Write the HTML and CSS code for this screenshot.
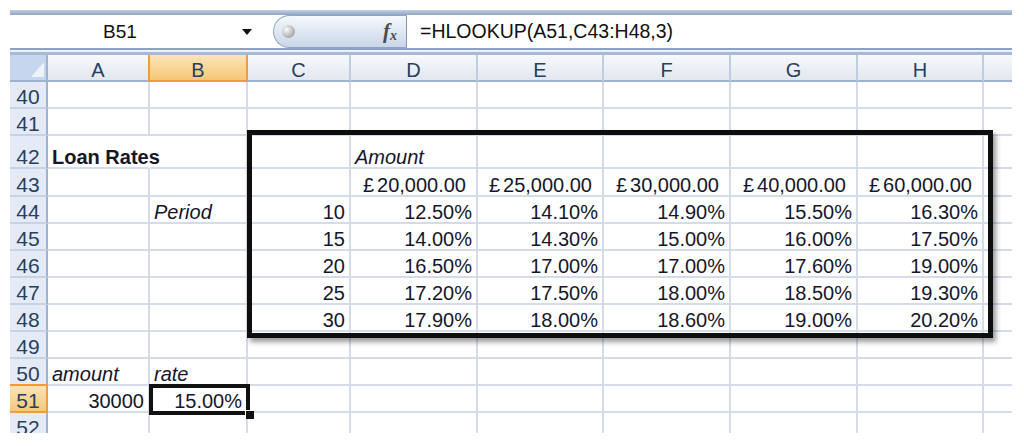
FILE: index.html
```html
<!DOCTYPE html>
<html lang="en">
<head>
    <meta charset="UTF-8">
    <title>Loan Rates - HLOOKUP</title>
    <link rel="stylesheet" href="styles.css">
</head>
<body>
<div class="app">
    <!-- formula bar -->
    <div class="band"></div>
    <div class="formula-bar">
        <div class="name-box"><span class="ref">B51</span><span class="arrow"></span></div>
        <div class="fx-btn"><span class="ball"></span><span class="fx"><i>f</i><sub>x</sub></span></div>
        <div class="formula">=HLOOKUP(A51,C43:H48,3)</div>
    </div>
    <div class="split"></div>

    <!-- worksheet -->
    <div class="sheet">
        <div class="row head">
            <div class="corner"><svg width="36" height="25" viewBox="0 0 36 25"><polygon points="34,7 34,22 21,22" fill="#eef3fa"/></svg></div>
            <div>A</div><div class="sel">B</div><div>C</div><div>D</div><div>E</div><div>F</div><div>G</div><div>H</div><div class="last"></div>
        </div>
        <div class="row"><div class="rh">40</div><div></div><div></div><div></div><div></div><div></div><div></div><div></div><div></div><div class="last"></div></div>
        <div class="row"><div class="rh">41</div><div></div><div></div><div></div><div></div><div></div><div></div><div></div><div></div><div class="last"></div></div>
        <div class="row h33"><div class="rh">42</div><div class="b spill">Loan Rates</div><div></div><div></div><div class="i">Amount</div><div></div><div></div><div></div><div></div><div class="last"></div></div>
        <div class="row h28"><div class="rh">43</div><div></div><div></div><div></div><div class="r cur"><span class="gbp">£</span>20,000.00</div><div class="r cur"><span class="gbp">£</span>25,000.00</div><div class="r cur"><span class="gbp">£</span>30,000.00</div><div class="r cur"><span class="gbp">£</span>40,000.00</div><div class="r cur"><span class="gbp">£</span>60,000.00</div><div class="last"></div></div>
        <div class="row"><div class="rh">44</div><div></div><div class="i">Period</div><div class="r">10</div><div class="r">12.50%</div><div class="r">14.10%</div><div class="r">14.90%</div><div class="r">15.50%</div><div class="r">16.30%</div><div class="last"></div></div>
        <div class="row"><div class="rh">45</div><div></div><div></div><div class="r">15</div><div class="r">14.00%</div><div class="r">14.30%</div><div class="r">15.00%</div><div class="r">16.00%</div><div class="r">17.50%</div><div class="last"></div></div>
        <div class="row"><div class="rh">46</div><div></div><div></div><div class="r">20</div><div class="r">16.50%</div><div class="r">17.00%</div><div class="r">17.00%</div><div class="r">17.60%</div><div class="r">19.00%</div><div class="last"></div></div>
        <div class="row"><div class="rh">47</div><div></div><div></div><div class="r">25</div><div class="r">17.20%</div><div class="r">17.50%</div><div class="r">18.00%</div><div class="r">18.50%</div><div class="r">19.30%</div><div class="last"></div></div>
        <div class="row"><div class="rh">48</div><div></div><div></div><div class="r">30</div><div class="r">17.90%</div><div class="r">18.00%</div><div class="r">18.60%</div><div class="r">19.00%</div><div class="r">20.20%</div><div class="last"></div></div>
        <div class="row"><div class="rh">49</div><div></div><div></div><div></div><div></div><div></div><div></div><div></div><div></div><div class="last"></div></div>
        <div class="row"><div class="rh">50</div><div class="i">amount</div><div class="i">rate</div><div></div><div></div><div></div><div></div><div></div><div></div><div class="last"></div></div>
        <div class="row"><div class="rh sel">51</div><div class="r">30000</div><div class="r">15.00%</div><div></div><div></div><div></div><div></div><div></div><div></div><div class="last"></div></div>
        <div class="row"><div class="rh">52</div><div></div><div></div><div></div><div></div><div></div><div></div><div></div><div></div><div class="last"></div></div>

        <!-- drawn box round the lookup table, and the active cell -->
        <div class="table-box"></div>
        <div class="active"><span class="handle"></span></div>
    </div>
</div>
</body>
</html>
```

FILE: styles.css
```css
body {
    margin: 0;
    background: #fff;
    font-family: "Liberation Sans", Arial, sans-serif;
    color: #16162a;
}
.app {
    width: 1002px;
    margin: 10px 0 0 10px;
}

/* formula bar */
.band {
    height: 5px;
    background: linear-gradient(#c2d0e4, #8ea5c6);
}
.formula-bar {
    height: 33px;
    display: flex;
    align-items: stretch;
    background: #fff;
}
.name-box {
    width: 253px;
    display: flex;
    align-items: center;
}
.ref {
    width: 220px;
    text-align: center;
    font-size: 19px;
    color: #111;
}
.arrow {
    margin-left: 12px;
    width: 0;
    height: 0;
    border-left: 5px solid transparent;
    border-right: 5px solid transparent;
    border-top: 6px solid #111;
}
.fx-btn {
    width: 134px;
    margin-left: 10px;
    box-sizing: border-box;
    display: flex;
    align-items: center;
    justify-content: space-between;
    padding: 0 9px 0 8px;
    border: 1px solid #8fa4c2;
    border-right-color: #7f95b6;
    border-radius: 17px 0 0 17px;
    background: linear-gradient(#f6f8fc, #dde6f2 55%, #c9d6e9);
}
.ball {
    width: 13px;
    height: 13px;
    border-radius: 50%;
    background: radial-gradient(circle at 35% 35%, #fafafa, #b5b5b5 60%, #8c8c8c);
}
.fx {
    font-family: "Liberation Serif", serif;
    font-style: italic;
    font-weight: bold;
    font-size: 21px;
    color: #4d4d4d;
}
.fx sub {
    font-size: 14px;
    vertical-align: -2px;
}
.formula {
    flex: 1;
    display: flex;
    align-items: center;
    padding-left: 13px;
    font-size: 19.5px;
    color: #111;
}
.split {
    height: 7px;
    box-sizing: border-box;
    border-top: 2px solid #8ca2c2;
    border-bottom: 3px solid #a6b9d5;
    background: #eef2f8;
}

/* worksheet */
.sheet {
    position: relative;
    height: 378px;
    overflow: hidden;
}
.row {
    display: grid;
    grid-template-columns: 38px 102px 98px 103px 127px 126px 127px 127px 126px 28px;
    height: 27px;
    font-size: 20px;
}
.row.h33 {
    height: 33px;
}
.row.h28 {
    height: 28px;
}
.row > div {
    box-sizing: border-box;
    display: flex;
    align-items: flex-end;
    line-height: 20px;
    padding: 0 4px;
    white-space: nowrap;
    border-right: 2px solid #d5dce9;
    border-bottom: 2px solid #d5dce9;
}
.row > .last {
    border-right: none;
}
.r {
    justify-content: flex-end;
}
.i {
    font-style: italic;
}
.b {
    font-weight: bold;
}
.row > .spill {
    border-right-color: #fff;
}
.row > .cur {
    padding-right: 10px;
}
.gbp {
    margin-right: 3px;
}

/* headers */
.row.head > div {
    justify-content: center;
    color: #27405f;
    background: linear-gradient(#f7f9fb, #e2e7ef);
    border-right-color: #c0cde0;
    border-bottom-color: #9db3cf;
}
.row.head > .corner {
    position: relative;
    padding: 0;
    background: #c5d6ee;
    border-right-color: #9db3cf;
}
.corner svg {
    position: absolute;
    left: 0;
    top: 0;
}
.row.head > .sel {
    background: linear-gradient(#fbe4b9, #f5c877);
    border-right-color: #f29a3d;
    border-bottom-color: #f29a3d;
    box-shadow: -2px 0 0 #f29a3d;
}
.row > .rh {
    justify-content: center;
    padding: 0;
    font-size: 21px;
    color: #27405f;
    background: #e4ebf6;
    border-right-color: #9db3cf;
    border-bottom-color: #c6d3e5;
}
.row > .rh.sel {
    background: linear-gradient(#fbe4b9, #f5c877);
    border-right-color: #f29a3d;
    border-bottom-color: #f29a3d;
    box-shadow: 0 -2px 0 #f29a3d;
}

/* overlays */
.table-box {
    position: absolute;
    left: 237px;
    top: 75px;
    width: 746px;
    height: 208px;
    box-sizing: border-box;
    border: 5px solid #0e0e0e;
    box-shadow: 3px 4px 5px rgba(0, 0, 0, 0.4);
}
.active {
    position: absolute;
    left: 139px;
    top: 329px;
    width: 101px;
    height: 31px;
    box-sizing: border-box;
    border: 4px solid #111;
}
.handle {
    position: absolute;
    left: 92px;
    top: 22px;
    width: 8px;
    height: 8px;
    background: #111;
    border-top: 1px solid #fff;
    border-left: 1px solid #fff;
}
```
